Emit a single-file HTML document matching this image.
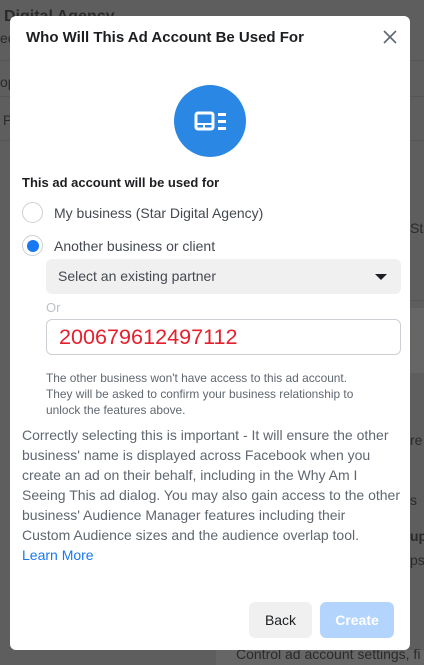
<!DOCTYPE html>
<html><head><style>
body{margin:0;width:424px;height:665px;background:#5e5e5e;position:relative;overflow:hidden;font-family:"Liberation Sans",Arial,sans-serif}
.bg{position:absolute;color:#2a2a2a;font-size:14px}
.m{position:absolute;left:10px;top:16px;width:400px;height:634px;background:#fff;border-radius:6px}
.a{position:absolute;white-space:nowrap}
</style></head><body>
<div class="bg" style="left:4px;top:8px;font-weight:bold;font-size:16px">Digital Agency</div>
<div class="bg" style="left:0;top:30px">ec</div>
<div style="position:absolute;left:0;top:60px;width:424px;height:1px;background:#555"></div>
<div class="bg" style="left:0;top:74px">op</div>
<div style="position:absolute;left:0;top:96px;width:424px;height:1px;background:#555"></div>
<div class="bg" style="left:3px;top:112px">P</div>
<div style="position:absolute;left:0;top:140px;width:424px;height:1px;background:#555"></div>
<div class="bg" style="left:410px;top:220px">Sta</div>
<div style="position:absolute;left:410px;top:300px;width:14px;height:1px;background:#555"></div>
<div style="position:absolute;left:410px;top:308px;width:14px;height:65px;background:#666"></div>
<div class="bg" style="left:410px;top:432px">re</div>
<div class="bg" style="left:410px;top:492px">s</div>
<div class="bg" style="left:410px;top:528px;font-weight:bold">up</div>
<div class="bg" style="left:410px;top:552px">ps</div>
<div style="position:absolute;left:216px;top:650px;width:208px;height:15px;background:#666"></div>
<div class="bg" style="left:236px;top:646px">Control ad account settings, fi</div>
<div class="m">
 <div class="a" style="left:16px;top:13px;font-size:15px;font-weight:bold;color:#1c1e21">Who Will This Ad Account Be Used For</div>
 <svg class="a" style="left:372px;top:13px" width="16" height="16" viewBox="0 0 16 16"><path d="M2 2L14 14M14 2L2 14" stroke="#606770" stroke-width="1.6"/></svg>
 <div class="a" style="left:164px;top:69px;width:72px;height:72px;border-radius:50%;background:#2a87e4"></div>
 <svg class="a" style="left:184px;top:95px" width="36" height="22" viewBox="0 0 36 22"><rect x="2" y="2" width="17" height="16" rx="2" fill="none" stroke="#fff" stroke-width="3"/><path d="M3 13H18M10 13V17" stroke="#fff" stroke-width="2"/><rect x="24" y="2" width="8" height="3" fill="#fff"/><rect x="24" y="9" width="8" height="3" fill="#fff"/><rect x="24" y="16" width="8" height="3" fill="#fff"/></svg>
 <div class="a" style="left:12px;top:159px;font-size:13px;font-weight:bold;color:#1c1e21">This ad account will be used for</div>
 <div class="a" style="left:12px;top:186px;width:21px;height:21px;border:1px solid #ccd0d5;border-radius:50%;box-sizing:border-box"></div>
 <div class="a" style="left:44px;top:189px;font-size:14px;color:#444950">My business (Star Digital Agency)</div>
 <div class="a" style="left:12px;top:219px;width:21px;height:21px;border:1px solid #ccd0d5;border-radius:50%;box-sizing:border-box"></div>
 <div class="a" style="left:17px;top:224px;width:12px;height:12px;border-radius:50%;background:#1877f2"></div>
 <div class="a" style="left:44px;top:222px;font-size:14px;color:#444950">Another business or client</div>
 <div class="a" style="left:36px;top:243px;width:355px;height:35px;background:#f0f0f0;border-radius:6px"></div>
 <div class="a" style="left:48px;top:252px;font-size:14px;color:#444950">Select an existing partner</div>
 <svg class="a" style="left:365px;top:257px" width="12" height="8" viewBox="0 0 12 8"><path d="M0 1H12L6 7Z" fill="#1c1e21"/></svg>
 <div class="a" style="left:36px;top:284px;font-size:13px;color:#bec3c9">Or</div>
 <div class="a" style="left:36px;top:303px;width:355px;height:36px;border:1px solid #ccd0d5;border-radius:6px;box-sizing:border-box"></div>
 <div class="a" style="left:49px;top:308px;font-size:21.6px;color:#e5202e">200679612497112</div>
 <div class="a" style="left:36px;top:354px;font-size:11.9px;line-height:16px;color:#606770">The other business won't have access to this ad account.<br>They will be asked to confirm your business relationship to<br>unlock the features above.</div>
 <div class="a" style="left:12px;top:409px;font-size:14px;line-height:20px;color:#606770">Correctly selecting this is important - It will ensure the other<br>business' name is displayed across Facebook when you<br>create an ad on their behalf, including in the Why Am I<br>Seeing This ad dialog. You may also gain access to the other<br>business' Audience Manager features including their<br>Custom Audience sizes and the audience overlap tool.<br><span style="color:#1877f2">Learn More</span></div>
 <div class="a" style="left:239px;top:586px;width:63px;height:36px;background:#f0f0f0;border-radius:6px;font-size:14px;color:#1c1e21;text-align:center;line-height:36px">Back</div>
 <div class="a" style="left:310px;top:586px;width:74px;height:36px;background:#b3d4fc;border-radius:6px;font-size:14px;font-weight:bold;color:#fff;text-align:center;line-height:36px">Create</div>
</div>
</body></html>
